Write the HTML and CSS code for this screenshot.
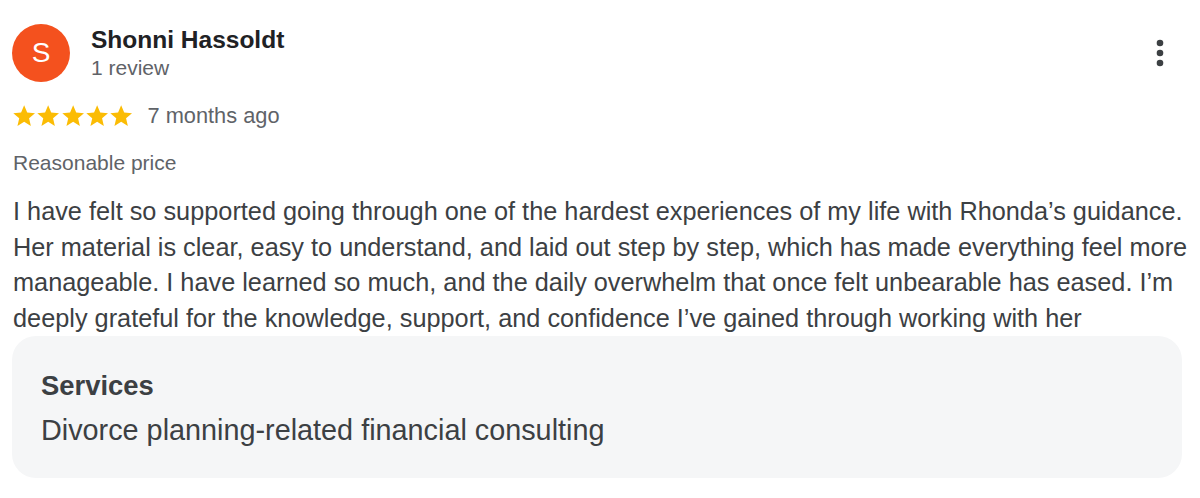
FILE: index.html
```html
<!DOCTYPE html>
<html>
<head>
<meta charset="utf-8">
<link rel="stylesheet" href="styles.css">
</head>
<body>
<div class="review">
  <div class="header">
    <div class="avatar">S</div>
    <div class="who">
      <div class="name">Shonni Hassoldt</div>
      <div class="count">1 review</div>
    </div>
    <div class="menu">
      <svg width="24" height="32" viewBox="0 0 24 32"><circle cx="12" cy="6" r="3.3" fill="#3c4043"/><circle cx="12" cy="16" r="3.3" fill="#3c4043"/><circle cx="12" cy="26" r="3.3" fill="#3c4043"/></svg>
    </div>
  </div>
  <div class="rating">
    <div class="stars">
      <svg viewBox="0.8 0.8 22.4 22.4"><path d="M12 17.27L18.18 21l-1.64-7.03L22 9.24l-7.19-.61L12 2 9.19 8.63 2 9.24l5.46 4.73L5.82 21z" fill="#fbbc04"/></svg>
      <svg viewBox="0.8 0.8 22.4 22.4"><path d="M12 17.27L18.18 21l-1.64-7.03L22 9.24l-7.19-.61L12 2 9.19 8.63 2 9.24l5.46 4.73L5.82 21z" fill="#fbbc04"/></svg>
      <svg viewBox="0.8 0.8 22.4 22.4"><path d="M12 17.27L18.18 21l-1.64-7.03L22 9.24l-7.19-.61L12 2 9.19 8.63 2 9.24l5.46 4.73L5.82 21z" fill="#fbbc04"/></svg>
      <svg viewBox="0.8 0.8 22.4 22.4"><path d="M12 17.27L18.18 21l-1.64-7.03L22 9.24l-7.19-.61L12 2 9.19 8.63 2 9.24l5.46 4.73L5.82 21z" fill="#fbbc04"/></svg>
      <svg viewBox="0.8 0.8 22.4 22.4"><path d="M12 17.27L18.18 21l-1.64-7.03L22 9.24l-7.19-.61L12 2 9.19 8.63 2 9.24l5.46 4.73L5.82 21z" fill="#fbbc04"/></svg>
    </div>
    <span class="when">7 months ago</span>
  </div>
  <div class="tag">Reasonable price</div>
  <p class="text">I have felt so supported going through one of the hardest experiences of my life with Rhonda’s guidance. Her material is clear, easy to understand, and laid out step by step, which has made everything feel more manageable. I have learned so much, and the daily overwhelm that once felt unbearable has eased. I’m deeply grateful for the knowledge, support, and confidence I’ve gained through working with her</p>
  <div class="services">
    <div class="s-title">Services</div>
    <div class="s-value">Divorce planning-related financial consulting</div>
  </div>
</div>
</body>
</html>
```
FILE: styles.css
```css
html, body {
  margin: 0;
  background: #ffffff;
}
body {
  font-family: "Liberation Sans", Arial, sans-serif;
  color: #3c4043;
}
.review {
  padding: 24px 18px 0 12px;
}
.header {
  display: flex;
  align-items: flex-start;
}
.avatar {
  width: 58px;
  height: 58px;
  border-radius: 50%;
  background: #f4511e;
  color: #fff;
  font-size: 28px;
  line-height: 58px;
  text-align: center;
  flex: none;
}
.who {
  margin-left: 21px;
  flex: 1;
}
.name {
  font-size: 24.5px;
  font-weight: 700;
  color: #202124;
  line-height: 30px;
  margin-top: 1px;
}
.count {
  font-size: 21px;
  color: #5f6368;
  line-height: 26px;
}
.menu {
  margin-top: 13px;
  margin-right: 10px;
}
.menu svg { display: block; }
.rating {
  display: flex;
  align-items: center;
  margin-top: 19px;
  height: 30px;
}
.stars {
  display: flex;
  margin-left: 0;
}
.stars svg {
  display: block;
  width: 24.3px;
  height: 24.3px;
}
.when {
  margin-left: 14px;
  font-size: 21.8px;
  color: #5f6368;
}
.tag {
  margin-top: 19px;
  font-size: 21px;
  color: #5f6368;
  line-height: 26px;
  padding-left: 1px;
}
.text {
  margin: 18px -12px 0 1px;
  font-size: 25.3px;
  line-height: 35.5px;
  color: #3c4043;
}
.services {
  margin-top: 0;
  background: #f5f6f7;
  border-radius: 24px;
  padding: 28px 29px 26px;
}
.s-title {
  font-size: 27.4px;
  font-weight: 700;
  color: #3c4043;
  line-height: 44px;
}
.s-value {
  font-size: 28.8px;
  color: #3c4043;
  line-height: 44px;
}
```
